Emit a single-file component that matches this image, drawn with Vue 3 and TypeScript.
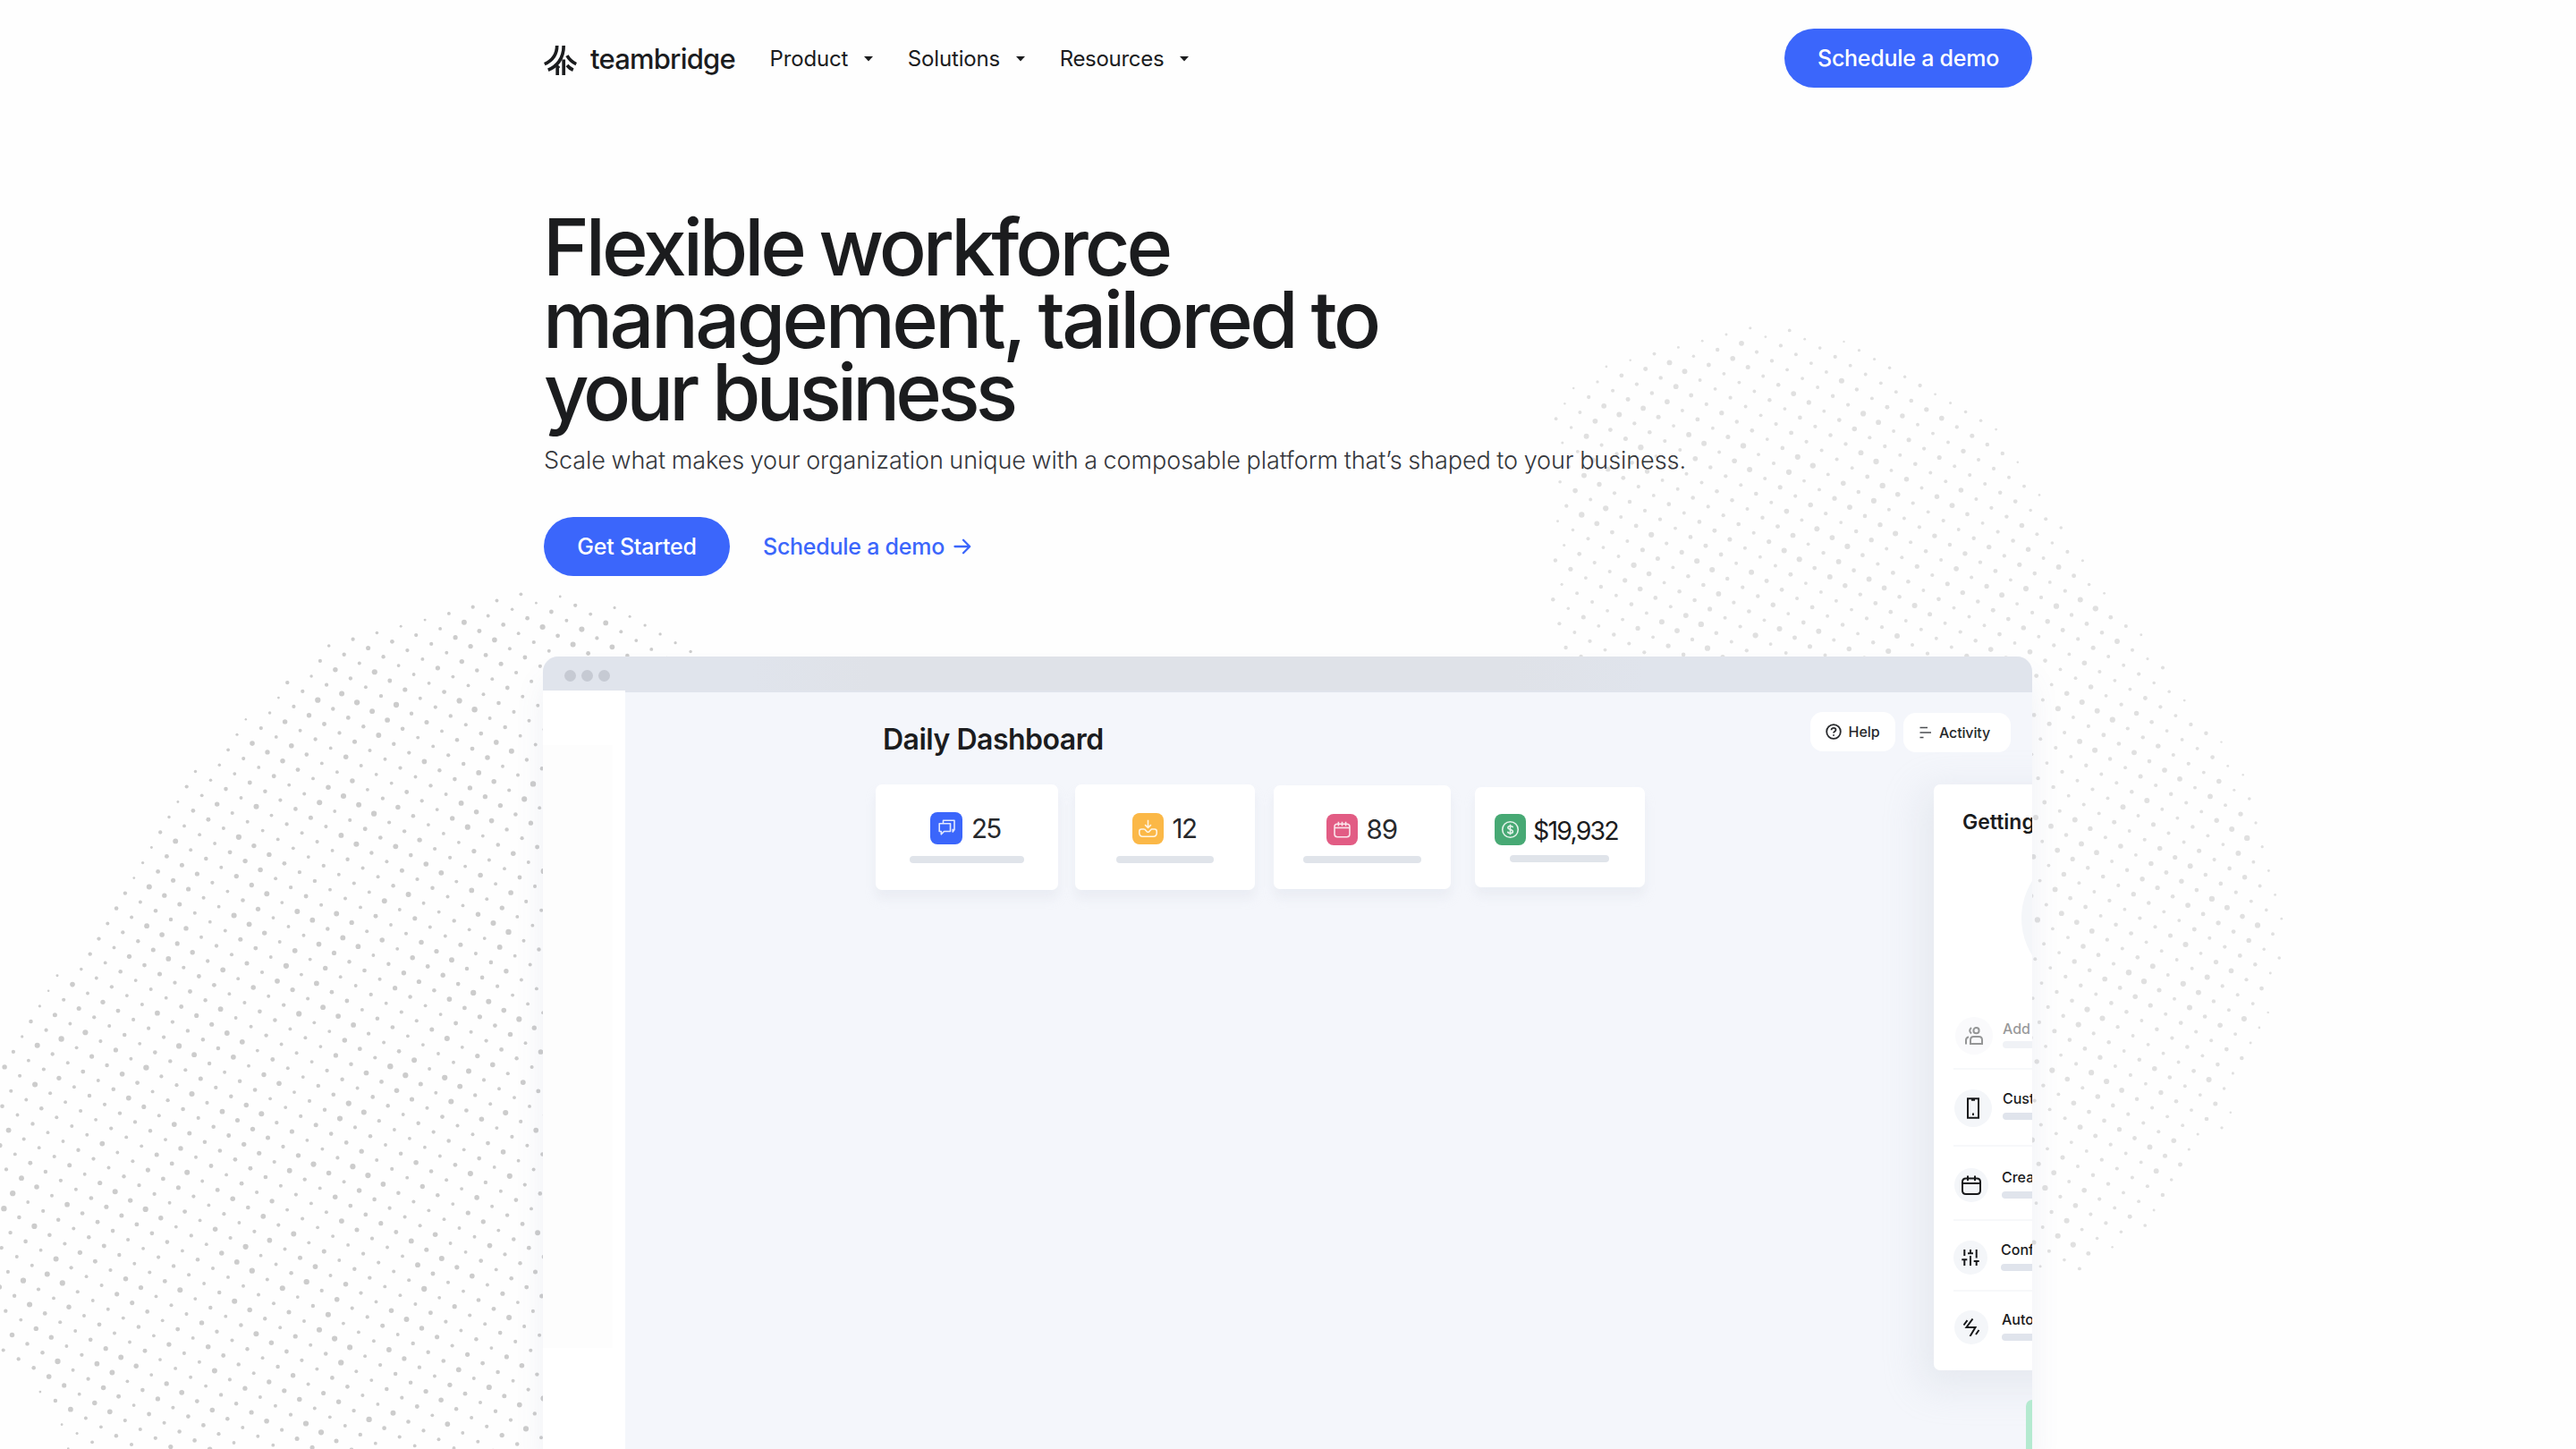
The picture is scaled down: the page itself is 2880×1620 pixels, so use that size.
<script setup lang="ts">
interface Dot { x: number; y: number; r: number }
type Point = [number, number]

// Pseudo-random value in 0..1 for a lattice cell
function noise(i: number, j: number): number {
  const s = Math.sin(i * 127.1 + j * 311.7) * 43758.5453
  return s - Math.floor(s)
}

function contains(poly: Point[], x: number, y: number): boolean {
  let inside = false
  for (let a = 0, b = poly.length - 1; a < poly.length; b = a++) {
    const [xa, ya] = poly[a]
    const [xb, yb] = poly[b]
    if (ya > y !== yb > y && x < ((xb - xa) * (y - ya)) / (yb - ya) + xa) inside = !inside
  }
  return inside
}

// Share of the surroundings that lies in the outline: dots shrink towards the rim
function coverage(poly: Point[], x: number, y: number): number {
  let hits = 0
  for (let k = 0; k < 8; k++) {
    const t = (k * Math.PI) / 4
    if (contains(poly, x + 22 * Math.cos(t), y + 22 * Math.sin(t))) hits++
  }
  return hits / 8
}

// Fills an outline with a square lattice turned by 30 degrees
function halftone(poly: Point[], ox: number, oy: number, base: number, spread: number): Dot[] {
  const dots: Dot[] = []
  for (let i = -110; i <= 110; i++) {
    for (let j = -110; j <= 110; j++) {
      const x = ox + i * 17.01 - j * 9.82
      const y = oy + i * 9.82 + j * 17.01
      if (x < -5 || x > 2885 || y < 300 || y > 1625 || !contains(poly, x, y)) continue
      const n = noise(i, j)
      const edge = 0.25 + 0.75 * coverage(poly, x, y)
      dots.push({ x: +x.toFixed(1), y: +y.toFixed(1), r: +((base + spread * n * n) * edge).toFixed(2) })
    }
  }
  return dots
}

const leftShape: Point[] = [
  [830, 760], [800, 723], [714, 679], [612, 660], [536, 667], [434, 693], [378, 709], [332, 746],
  [296, 784], [230, 846], [184, 902], [143, 990], [87, 1052], [31, 1146], [-40, 1190], [-40, 1480],
  [31, 1546], [66, 1602], [90, 1660], [830, 1660],
]
const rightShape: Point[] = [
  [1740, 760], [1735, 676], [1733, 626], [1740, 560], [1735, 469], [1750, 437], [1792, 407], [1849, 387],
  [1930, 368], [1987, 364], [2070, 376], [2142, 408], [2234, 480], [2310, 596], [2378, 688], [2446, 778],
  [2510, 861], [2545, 947], [2556, 1033], [2545, 1111], [2494, 1247], [2414, 1360], [2326, 1424], [2200, 1430],
]
const leftDots = halftone(leftShape, 437, 1034, 1.9, 1.3)
const rightDots = halftone(rightShape, 2380.7, 929, 1.9, 1.3)

const menus = ['Product', 'Solutions', 'Resources']

const stats = [
  { id: 'chat', value: '25' },
  { id: 'inbox', value: '12' },
  { id: 'calendar', value: '89' },
  { id: 'money', value: '$19,932' },
]

const steps = [
  { id: 'people', label: 'Add people' },
  { id: 'phone', label: 'Customize' },
  { id: 'date', label: 'Create' },
  { id: 'sliders', label: 'Configure' },
  { id: 'auto', label: 'Automate' },
]
</script>

<template>
  <div class="page">
    <svg class="art" viewBox="0 0 2880 1620" aria-hidden="true">
      <g fill="#cccccc"><circle v-for="(d, k) in leftDots" :key="k" :cx="d.x" :cy="d.y" :r="d.r" /></g>
      <g fill="#e0e0e0"><circle v-for="(d, k) in rightDots" :key="k" :cx="d.x" :cy="d.y" :r="d.r" /></g>
    </svg>

    <div class="container">
      <header class="nav">
        <a class="brand">
          <svg class="mark" viewBox="0 0 37 33" fill="none" stroke="#1b1c1e" stroke-width="3.7">
            <path d="M14.7 0C14.7 10.5 9 17 .8 20.6" />
            <path d="M22.2 0C22.2 14.5 14.5 23.5 4.8 27.2" />
            <path d="M15.2 33V24.5L17 22.7" />
            <path d="M22.2 33V15.5" />
            <path d="M26 11.2C28.5 15.8 31.8 18.6 36.2 20.6" />
            <path d="M26 22C28 24.6 30 26 32.8 27.2" />
          </svg>
          <span class="brand-name">teambridge</span>
        </a>
        <nav class="menus">
          <a v-for="m in menus" :key="m" class="menu">
            <span class="menu-name" :class="m.toLowerCase()">{{ m }}</span>
            <svg class="caret" viewBox="0 0 10 6"><path d="M0 0H10L5 5.5Z" fill="#1b1c1e" /></svg>
          </a>
        </nav>
        <a class="btn demo">Schedule a demo</a>
      </header>

      <section class="hero">
        <h1>
          <span class="l1">Flexible workforce</span>
          <span class="l2">management, tailored to</span>
          <span class="l3">your business</span>
        </h1>
        <p>Scale what makes your organization unique with a composable platform that’s shaped to your business.</p>
        <div class="actions">
          <a class="btn start">Get Started</a>
          <a class="link">
            <span>Schedule a demo</span>
            <svg class="arrow" viewBox="0 0 20 18" fill="none" stroke="#3b66fb" stroke-width="2.3" stroke-linecap="round" stroke-linejoin="round"><path d="M1.5 9H18M11 1.8L18.2 9L11 16.2" /></svg>
          </a>
        </div>
      </section>

      <section class="window">
        <div class="titlebar"><i></i><i></i><i></i></div>
        <div class="screen">
          <aside class="side">
            <div class="side-shade"></div>
          </aside>
          <div class="main">
            <div class="left">
              <h2>Daily Dashboard</h2>
              <div class="cards">
                <div v-for="s in stats" :key="s.id" class="card" :class="s.id">
                  <div class="figure">
                    <span class="tile">
                      <svg v-if="s.id === 'chat'" viewBox="0 0 36 36"><path d="M14.5 12.5V9.2H27V19.5L25.2 22V18.8M10.2 12.8H22.5V21.5H15.5L12.3 24.8V21.5H10.2Z" /></svg>
                      <svg v-else-if="s.id === 'inbox'" viewBox="0 0 36 36"><path d="M18 8V16.5M14.5 13.5L18 17L21.5 13.5M14 18.5H10.5Q8 18.5 8 21V23Q8 27 12 27H24Q28 27 28 23V21Q28 18.5 25.5 18.5H22L18.8 21.8H17.2L14 18.5" /></svg>
                      <svg v-else-if="s.id === 'calendar'" viewBox="0 0 36 36"><path d="M12.5 11.5H23.5Q26.7 11.5 26.7 14.5V23.5Q26.7 26.5 23.5 26.5H12.5Q9.3 26.5 9.3 23.5V14.5Q9.3 11.5 12.5 11.5ZM9.3 16H26.7M13.8 9V14M18 9V14M22.2 9V14" /></svg>
                      <svg v-else viewBox="0 0 36 36"><circle cx="18" cy="18" r="9" /><path d="M21 15.7C20.8 13.2 15.3 13.2 15.3 15.8C15.3 18.5 21 17.4 21 20.2C21 22.8 15.2 22.8 15 20.2M18 12V24" /></svg>
                    </span>
                    <span class="value">{{ s.value }}</span>
                  </div>
                  <div class="line"></div>
                </div>
              </div>
            </div>
            <div class="right">
              <div class="pills">
                <span class="pill help">
                  <svg viewBox="0 0 18 18" fill="none" stroke="#27292c" stroke-width="1.8"><circle cx="9" cy="9" r="7.8" /><path d="M6.5 7.2C6.5 4 11.5 4.2 11.5 7C11.5 8.8 9 8.7 9 10.6M9 12.2V13.8" /></svg>
                  Help
                </span>
                <span class="pill activity">
                  <svg viewBox="0 0 14 14" fill="none" stroke="#4a4c50" stroke-width="1.6"><path d="M.5 1.5H9M.5 7H13M.5 12.5H4.5" /></svg>
                  Activity
                </span>
              </div>
              <div class="panel">
                <h3>Getting started</h3>
                <div class="ring"></div>
                <ul>
                  <li v-for="s in steps" :key="s.id" :class="s.id">
                    <span class="disc">
                      <svg v-if="s.id === 'people'" viewBox="0 0 20 20"><path d="M7 1Q3.4 4.2 7 7.5M1 19.5V15Q1 12 4 11.2M6 19V14.8Q6 11 9.5 11H15.5Q19 11 19 14.8V19Z" /><circle cx="12.5" cy="4.2" r="3.1" /></svg>
                      <svg v-else-if="s.id === 'phone'" viewBox="0 0 20 24"><path d="M4 1.2H16V22.8H4ZM8 2.8H12M10 17.5V20" /></svg>
                      <svg v-else-if="s.id === 'date'" viewBox="0 0 22 22"><path d="M5 3.5H17Q21 3.5 21 7.5V17Q21 21 17 21H5Q1 21 1 17V7.5Q1 3.5 5 3.5ZM1 9H21M7 .5V6M15 .5V6" /></svg>
                      <svg v-else-if="s.id === 'sliders'" viewBox="0 0 20 20"><path d="M3.3 1V8M.3 12.2H6.3M3.3 12V19M10 1V5M7 5.2H13M10 8V19M16.7 1V10.5M13.7 14H19.7M16.7 14V19" /></svg>
                      <svg v-else viewBox="0 0 20 20"><path d="M11.5 .5L4.5 10H14.5L8.5 20M5.5 2.2L1.5 7.5M18.5 13L15 18" /></svg>
                    </span>
                    <span class="text"><b>{{ s.label }}</b><i></i></span>
                  </li>
                </ul>
              </div>
              <div class="green"></div>
            </div>
          </div>
        </div>
      </section>
    </div>
  </div>
</template>

<style>
html, body { margin: 0; background: #fefefe; overflow: hidden; }
</style>

<style scoped>
.page { position: relative; width: 2880px; height: 1620px; overflow: hidden; background: #fefefe; color: #1b1c1e; font-family: Inter, "Liberation Sans", sans-serif; }
.art { position: absolute; inset: 0; width: 2880px; height: 1620px; }
.container { position: relative; width: 1664px; margin-left: 608px; }
h1, h2, h3, p, ul { margin: 0; padding: 0; }
svg { display: block; flex: none; }

.nav { display: flex; align-items: center; padding-top: 32px; height: 66px; }
.brand { display: flex; align-items: center; width: 252.5px; }
.mark { width: 37px; height: 33px; margin-top: 4px; }
.brand-name { margin: 2px 0 0 15px; font-size: 31px; line-height: 40px; font-weight: 550; letter-spacing: -.8px; }
.menus { display: flex; flex: 1; padding-top: 1px; }
.menu { display: flex; align-items: center; margin-right: 39px; }
.menu-name { font-size: 24px; line-height: 30px; font-weight: 380; letter-spacing: -.15px; white-space: nowrap; }
.menu-name.resources { letter-spacing: -.3px; }
.caret { width: 10px; height: 6px; margin: 1px 0 0 17.5px; }
.btn { display: flex; align-items: center; justify-content: center; height: 66px; border-radius: 33px; background: #3b66fb; color: #fff; font-size: 25px; line-height: 32px; font-weight: 460; letter-spacing: -.25px; white-space: nowrap; }
.demo { width: 277px; }

.hero { padding-top: 138px; }
h1 { height: 243px; font-size: 88px; line-height: 81px; font-weight: 500; white-space: nowrap; }
h1 span { display: block; margin-left: -1px; }
.l1 { letter-spacing: -4.05px; word-spacing: -2px; }
.l2 { letter-spacing: -3.6px; word-spacing: -2.5px; }
.l3 { margin-left: 0; letter-spacing: -4.9px; }
p { margin-top: 16px; height: 40px; font-size: 27px; line-height: 40px; font-weight: 350; letter-spacing: -.06px; word-spacing: -.9px; color: #35373c; white-space: nowrap; }
.actions { display: flex; align-items: center; margin-top: 42.5px; }
.start { width: 208px; }
.link { display: flex; align-items: center; margin-left: 37px; color: #3b66fb; font-size: 25px; font-weight: 460; letter-spacing: -.25px; white-space: nowrap; }
.arrow { width: 20px; height: 18px; margin-left: 10px; }

.window { margin: 90.5px 0 0 -1px; width: 1665px; height: 886px; overflow: hidden; border-radius: 17px 17px 0 0; background: #f4f6fb; box-shadow: 0 24px 34px -2px rgba(90, 110, 160, .1); }
.titlebar { display: flex; align-items: center; gap: 6px; height: 38px; padding: 5px 0 0 24px; box-sizing: border-box; background: linear-gradient(90deg, #e0e4ec 14%, #dfe2e8 22%, #dfe2e8 65%, #e0e4ec 74%); }
.titlebar i { width: 13px; height: 13px; border-radius: 50%; background: #c6cad3; }
.screen { display: flex; height: 848px; }
.side { flex: none; width: 92px; background: #fff; }
.side-shade { width: 78px; height: 674px; margin-top: 61px; background: #fdfdfd; }
.main { display: flex; flex: 1; min-width: 0; border-top: 2px solid #e0e4ec; }
.left { flex: none; width: 1325px; padding-left: 280px; box-sizing: border-box; }
h2 { height: 40px; margin: 33px 0 0 8px; font-size: 32px; line-height: 40px; font-weight: 600; letter-spacing: -.5px; white-space: nowrap; }
.cards { display: flex; align-items: flex-start; padding-top: 30px; }
.card { flex: none; box-sizing: border-box; border-radius: 7px; background: #fff; box-shadow: 0 10px 12px rgba(210, 214, 224, .26); }
.figure { display: flex; align-items: center; }
.tile { flex: none; width: 35px; height: 35px; border-radius: 8px; }
.tile svg { width: 100%; height: 100%; fill: none; stroke: #fff; stroke-width: 1.6; stroke-linejoin: round; stroke-opacity: .85; }
.value { font-size: 29.5px; line-height: 36px; white-space: nowrap; color: #27292c; }
.line { height: 8px; border-radius: 4px; background: #e0e4ea; }
.chat { width: 204px; height: 118px; padding: 31px 0 0 61px; }
.chat .tile { width: 36px; height: 36px; background: #3b66fb; }
.chat .value { margin-left: 10px; letter-spacing: -1.8px; }
.chat .line { width: 128px; margin: 13px 0 0 -23px; }
.inbox { width: 201px; height: 118px; margin-left: 19px; padding: 31px 0 0 64px; }
.inbox .tile { background: #fbb847; }
.inbox .value { margin-left: 9.5px; letter-spacing: -1.6px; }
.inbox .line { width: 109px; margin: 13px 0 0 -18px; }
.calendar { width: 198px; height: 116px; margin: 1px 0 0 21px; padding: 31px 0 0 59px; }
.calendar .tile { background: #e25c84; }
.calendar .value { margin-left: 9.5px; letter-spacing: -1px; }
.calendar .line { width: 132px; margin: 12px 0 0 -26px; }
.money { width: 190px; height: 112px; margin: 3px 0 0 27px; padding: 29px 0 0 22px; }
.money .tile { background: #47a974; }
.money .value { margin: 2px 0 -2px 8px; font-size: 28.5px; letter-spacing: -1.8px; color: #1b1c1e; }
.money .line { width: 111px; margin: 11px 0 0 17px; }

.right { flex: 1; min-width: 0; overflow: hidden; }
.pills { display: flex; gap: 9px; padding-top: 22px; height: 46px; }
.pill { display: flex; flex: none; align-items: center; box-sizing: border-box; height: 44px; border-radius: 14px; background: #fff; font-size: 16px; font-weight: 540; white-space: nowrap; color: #27292c; }
.help { width: 95px; padding-left: 17px; }
.help svg { width: 18px; height: 18px; margin-right: 7.5px; }
.activity { width: 120px; margin-top: 1px; padding-left: 18px; letter-spacing: -.15px; }
.activity svg { width: 14px; height: 14px; margin: -1px 8px 0 0; }
.panel { width: 220px; height: 655px; margin: 35px 0 0 138px; overflow: hidden; border-radius: 7px; background: #fff; box-shadow: -8px 12px 42px 8px rgba(190, 196, 208, .24); }
h3 { margin: 27px 0 0 32px; height: 30px; font-size: 23px; line-height: 30px; font-weight: 600; white-space: nowrap; }
.ring { width: 157px; height: 157px; margin: 13.5px 0 0 97.5px; border-radius: 50%; background: #f4f6f9; }
ul { margin: 24px 0 0 22px; list-style: none; }
li { display: flex; box-sizing: border-box; border-bottom: 2px solid #f7f8fa; }
li:last-child { border: 0; }
.disc { display: flex; flex: none; align-items: center; justify-content: center; width: 38px; height: 38px; border-radius: 50%; background: #f4f6f9; }
.disc svg { width: 20px; height: 20px; fill: none; stroke: #17181a; stroke-width: 2; }
.text { display: block; }
.text b { display: block; height: 20px; font-size: 16px; line-height: 20px; font-weight: 540; white-space: nowrap; }
.text i { display: block; width: 100px; height: 8px; margin-top: 6px; border-radius: 4px; background: #e0e4ec; }
.people { height: 67.5px; padding: 8px 0 0 2px; }
.people .disc, .people .text { opacity: .45; }
.people .disc, .phone .disc { width: 42px; height: 42px; }
.people .text { padding: 3px 0 0 11px; }
.people .text i { margin-top: 4px; }
.phone { height: 86px; padding: 22px 0 0 1px; }
.phone .disc svg { height: 24px; }
.phone .text { padding: 0 0 0 12px; }
.date { height: 82.5px; padding: 23.5px 0 0 1px; }
.date .disc svg { width: 22px; height: 22px; }
.date .text { padding: 0 0 0 15px; }
.sliders { height: 79px; padding: 22px 0 0; }
.sliders .text { padding: 0 0 0 15px; }
.auto { padding: 21px 0 0 1px; }
.auto .text { padding: 0 0 0 15px; }
.green { width: 40px; height: 60px; margin: 33px 0 0 241px; border-radius: 7px 0 0 0; background: #b4ead0; }
</style>
